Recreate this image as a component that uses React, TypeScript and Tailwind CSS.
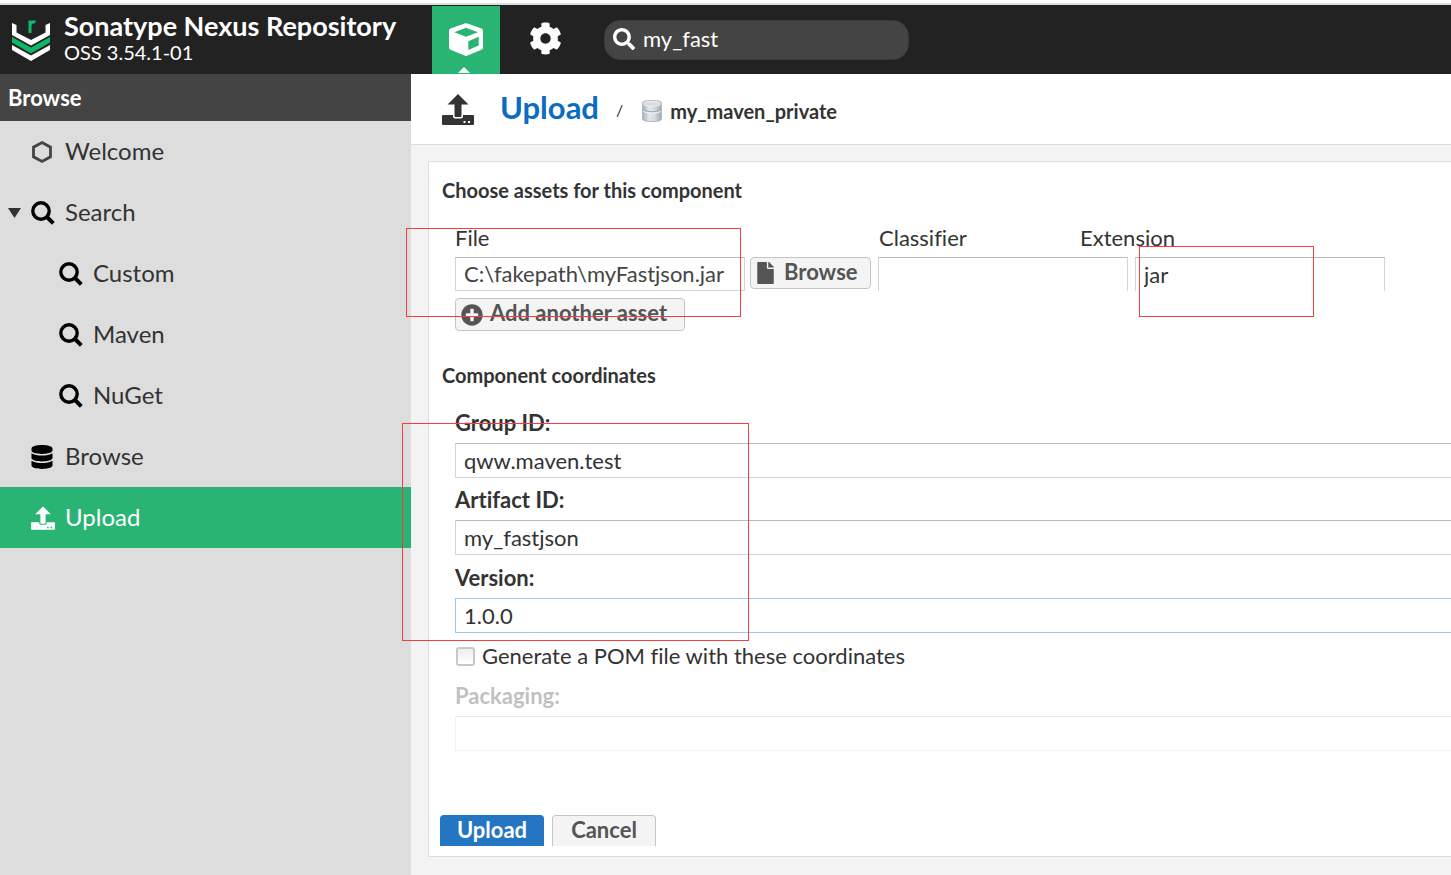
import React from "react";
import { FaCog, FaDatabase, FaFile, FaPlusCircle, FaSearch } from "react-icons/fa";

function Logo() {
  return (
    <svg viewBox="0 0 38 42" className="h-[42px] w-[38px]" aria-hidden="true">
      <path d="M0 4 L4.500 6 V13.500 L19 21 L33.500 13.500 V6 L38 4 V16 L19 26.5 L0 16 Z" fill="#fff" />
      <path d="M0 18 L19 28.5 L38 18 V23.500 L19 34.500 L0 23.500 Z" fill="#0cb766" />
      <path d="M0 26 L19 36.5 L38 26 V31 L19 42 L0 31 Z" fill="#fff" />
      <path d="M18 14 V1.500 M18 6 Q19 2.500 23.500 2.800" fill="none" stroke="#0cb766" strokeWidth="3" />
    </svg>
  );
}

function CubeIcon() {
  return (
    <svg viewBox="0 0 34 33" className="h-[33px] w-[34px]" fill="currentColor" aria-hidden="true">
      <path
        fillRule="evenodd"
        d="M15.500 0.500 Q17 0 18.500 0.500 L32.500 5.500 Q34 6.200 34 8 V24.500 Q34 26 32.500 26.800 L18.500 32.600 Q17 33.200 15.500 32.600 L1.500 26.800 Q0 26 0 24.500 V8 Q0 6.200 1.500 5.500 Z M5.300 9.300 L17 13.700 L29 9.300 L17 4.700 Z M19.300 18.300 V27 L29.700 22.500 V13.700 Z"
      />
    </svg>
  );
}

function UploadIcon({ className }: { className: string }) {
  return (
    <svg viewBox="0 0 32 31" className={className} fill="currentColor" aria-hidden="true">
      <path d="M16 0 L26.500 10.500 H19.500 V22 Q19.500 23 18.500 23 H13.500 Q12.500 23 12.500 22 V10.500 H5.500 Z" />
      <path
        fillRule="evenodd"
        d="M1 21 H11 V22.500 Q11 24.500 13 24.500 H19 Q21 24.500 21 22.500 V21 H31 Q32 21 32 22 V30 Q32 31 31 31 H1 Q0 31 0 30 V22 Q0 21 1 21 Z M21.500 27 V29 H23.500 V27 Z M26 27 V29 H28 V27 Z"
      />
    </svg>
  );
}

function SearchIcon() {
  return (
    <svg viewBox="0 0 24 24" className="size-6" fill="none" stroke="#000" aria-hidden="true">
      <circle cx="10" cy="10" r="8.200" strokeWidth="3.400" />
      <path d="M16 16 L22.300 22.300" strokeWidth="4" />
    </svg>
  );
}

function HexagonIcon() {
  return (
    <svg viewBox="0 0 24 24" className="size-6" fill="none" stroke="#444" strokeWidth="2.800" aria-hidden="true">
      <path d="M11 2.500 L19.500 7.200 V16.800 L11 21.500 L2.500 16.800 V7.200 Z" />
    </svg>
  );
}

function RepositoryIcon() {
  return (
    <svg viewBox="0 0 20 22" className="h-[22px] w-5" aria-hidden="true">
      <defs>
        <linearGradient id="drum" x1="0" x2="1">
          <stop offset="0" stopColor="#a9afb8" />
          <stop offset="0.350" stopColor="#e3e7ee" />
          <stop offset="0.650" stopColor="#d3d9e2" />
          <stop offset="1" stopColor="#a3a9b2" />
        </linearGradient>
      </defs>
      <path d="M0.500 3 Q0.500 0.500 10 0.500 T19.500 3 V19 Q19.500 21.500 10 21.500 T0.500 19 Z" fill="url(#drum)" stroke="#b4b9c1" />
      <ellipse cx="10" cy="3.800" rx="8.500" ry="2.400" fill="#d8dde4" stroke="#eef1f5" />
      <path d="M1 10 Q10 13.500 19 10" fill="none" stroke="#a2a9b3" />
      <path d="M1 11.500 Q10 15 19 11.500" fill="none" stroke="#f2f5f9" />
    </svg>
  );
}

type NavItem = { label: string; icon: React.ReactNode; child?: boolean; open?: boolean; active?: boolean };

const navItems: NavItem[] = [
  { label: "Welcome", icon: <HexagonIcon /> },
  { label: "Search", icon: <SearchIcon />, open: true },
  { label: "Custom", icon: <SearchIcon />, child: true },
  { label: "Maven", icon: <SearchIcon />, child: true },
  { label: "NuGet", icon: <SearchIcon />, child: true },
  { label: "Browse", icon: <FaDatabase className="h-6 w-[22px] text-black" /> },
  { label: "Upload", icon: <UploadIcon className="size-6" />, active: true },
];

function Header() {
  return (
    <header className="mt-[3px] flex h-[71px] shrink-0 items-center border-t-2 border-[#ddd] bg-[#222] text-white">
      <div className="flex w-[432px] shrink-0 items-center gap-[14px] pl-3">
        <Logo />
        <div className="pb-1">
          <h1 className="text-[27px] leading-7 font-bold">Sonatype Nexus Repository</h1>
          <p className="text-xl leading-6">OSS 3.54.1-01</p>
        </div>
      </div>
      <button aria-label="Browse server contents" className="relative flex h-full w-[68px] items-center justify-center border-t border-[#222] bg-[#2ab474] pb-0.5">
        <CubeIcon />
        <svg viewBox="0 0 12 6" className="absolute bottom-px left-[26px] h-1.5 w-3" aria-hidden="true">
          <path d="M0 6 L6 0 L12 6 Z" fill="#fff" />
        </svg>
      </button>
      <button aria-label="Server administration" className="flex h-full w-[90px] items-center justify-center pb-0.5">
        <FaCog className="size-[33px]" />
      </button>
      <label className="ml-3.5 flex h-10 w-[305px] items-center gap-2 rounded-2xl border border-[#3a3a3a] bg-[#444] px-2 pb-0.5">
        <FaSearch className="size-[22px] shrink-0" />
        <input aria-label="Search components" defaultValue="my_fast" className="w-full min-w-0 bg-transparent text-[22px] outline-none" />
      </label>
    </header>
  );
}

function Sidebar() {
  return (
    <nav className="w-[411px] shrink-0 bg-[#ddd] text-[#333]">
      <h2 className="flex h-[47px] items-center bg-[#444] px-2 text-[22px] font-bold text-white">Browse</h2>
      <ul>
        {navItems.map((item) => (
          <li key={item.label}>
            <a
              href="#"
              className={`flex h-[61px] items-center text-2xl ${item.active ? "bg-[#2ab474] text-white" : ""} ${item.child ? "pl-9" : "pl-2"}`}
            >
              <span className="w-[23px] shrink-0">
                {item.open && (
                  <svg viewBox="0 0 13 10" className="h-2.5 w-[13px]" aria-hidden="true">
                    <path d="M0 0 H13 L6.500 10 Z" fill="#333" />
                  </svg>
                )}
              </span>
              <span className="w-[34px] shrink-0">{item.icon}</span>
              <span className="pb-0.5">{item.label}</span>
            </a>
          </li>
        ))}
      </ul>
    </nav>
  );
}

const fieldBorder = "border-[#d5d5d5] border-t-[#bbb]";
const focusedBorder = "border-[#99c9ec]";

function Field({ id, label, value, focused, disabled }: { id: string; label: string; value: string; focused?: boolean; disabled?: boolean }) {
  return (
    <div className={disabled ? "opacity-30" : ""}>
      <label htmlFor={id} className="block h-[42px] text-[22px] leading-[44px] font-bold">
        {label}
      </label>
      <input
        id={id}
        defaultValue={value}
        disabled={disabled}
        className={`block h-[35px] w-full border border-r-0 bg-white px-2 text-[22px] outline-none ${focused ? focusedBorder : fieldBorder}`}
      />
    </div>
  );
}

const assetButton = "flex items-center rounded border border-[#c4c4c4] bg-[#f4f4f4] text-[22px] font-bold text-[#555]";
const openInput = "h-[34px] w-[250px] border border-b-0 border-[#d5d5d5] border-t-[#bbb] px-2 text-[22px] outline-none";

function AssetFields() {
  return (
    <section className="pl-[13px]">
      <div className="flex h-[38px] items-center pb-0.5 text-[22px]">
        <label htmlFor="file" className="w-[424px]">File</label>
        <label htmlFor="classifier" className="w-[201px]">Classifier</label>
        <label htmlFor="extension">Extension</label>
      </div>
      <div className="flex items-start">
        <input
          id="file"
          readOnly
          value="C:\fakepath\myFastjson.jar"
          className="mr-[5px] h-[34px] w-[290px] border border-[#d5d5d5] border-t-[#bbb] px-2 pb-0.5 text-[22px] text-[#444] outline-none"
        />
        <button className={`${assetButton} mr-[7px] h-8 w-[121px] gap-2.5 pl-1.5`}>
          <FaFile className="h-[22px] w-[17px]" />
          <span className="pb-1">Browse</span>
        </button>
        <input id="classifier" className={`${openInput} mr-[7px]`} />
        <input id="extension" defaultValue="jar" className={openInput} />
      </div>
      <button className={`${assetButton} mt-[7px] h-[33px] w-[230px] gap-[7px] pl-[5px]`}>
        <FaPlusCircle className="size-[22px]" />
        <span className="pb-1">Add another asset</span>
      </button>
    </section>
  );
}

export default function App() {
  return (
    <div className="relative flex min-h-screen flex-col overflow-hidden bg-white font-[Lato,'Open_Sans',sans-serif] text-[#333] [font-variant-ligatures:none]">
      <Header />
      <div className="flex grow">
        <Sidebar />
        <main className="min-w-0 grow bg-[#f3f3f3]">
          <div className="flex h-[71px] items-center border-b border-[#ddd] bg-white pl-[31px]">
            <UploadIcon className="h-[31px] w-8" />
            <a href="#" className="ml-[26px] pb-1 text-[31px] leading-9 font-bold text-[#0b6cc4]">Upload</a>
            <span className="ml-[17px] pt-0.5 text-base">/</span>
            <span className="mt-1 ml-[19px] flex items-center gap-2 text-xl font-bold">
              <RepositoryIcon />
              my_maven_private
            </span>
          </div>
          <form className="mt-4 ml-[17px] border border-r-0 border-[#ddd] bg-white pb-2.5" onSubmit={(e) => e.preventDefault()}>
            <div className="pl-[13px]">
              <h3 className="h-[57px] text-xl leading-[57px] font-bold">Choose assets for this component</h3>
              <AssetFields />
              <h3 className="mt-[30px] h-7 text-xl leading-7 font-bold">Component coordinates</h3>
              <section className="mt-3 pl-[13px]">
                <Field id="group" label="Group ID:" value="qww.maven.test" />
                <Field id="artifact" label="Artifact ID:" value="my_fastjson" />
                <div className="pt-px">
                  <Field id="version" label="Version:" value="1.0.0" focused />
                </div>
                <div className="flex h-[41px] items-center gap-[7px] pt-1 pl-px text-[22px]">
                  <input
                    id="pom"
                    type="checkbox"
                    className="mt-0.5 size-[19px] appearance-none rounded-[3px] border-2 border-[#c8c8c8] bg-gradient-to-b from-[#eee] to-white"
                  />
                  <label htmlFor="pom">Generate a POM file with these coordinates</label>
                </div>
                <Field id="packaging" label="Packaging:" value="" disabled />
              </section>
            </div>
            <div className="mt-16 flex gap-2 pl-[11px] text-[22px] leading-7 font-bold">
              <button className="h-[31px] w-[104px] rounded-t border border-b-0 border-[#2475c2] bg-[#2475c2] pb-1 text-white">Upload</button>
              <button type="button" className="h-[31px] w-[104px] rounded-t border border-b-0 border-[#c4c4c4] bg-[#f4f4f4] pb-1 text-[#555]">
                Cancel
              </button>
            </div>
          </form>
        </main>
      </div>
      <div className="pointer-events-none absolute top-[228px] left-[406px] h-[89px] w-[335px] border border-[#f83b3b]" />
      <div className="pointer-events-none absolute top-[246px] left-[1139px] h-[71px] w-[175px] border border-[#f83b3b]" />
      <div className="pointer-events-none absolute top-[423px] left-[402px] h-[218px] w-[347px] border border-[#f83b3b]" />
    </div>
  );
}
